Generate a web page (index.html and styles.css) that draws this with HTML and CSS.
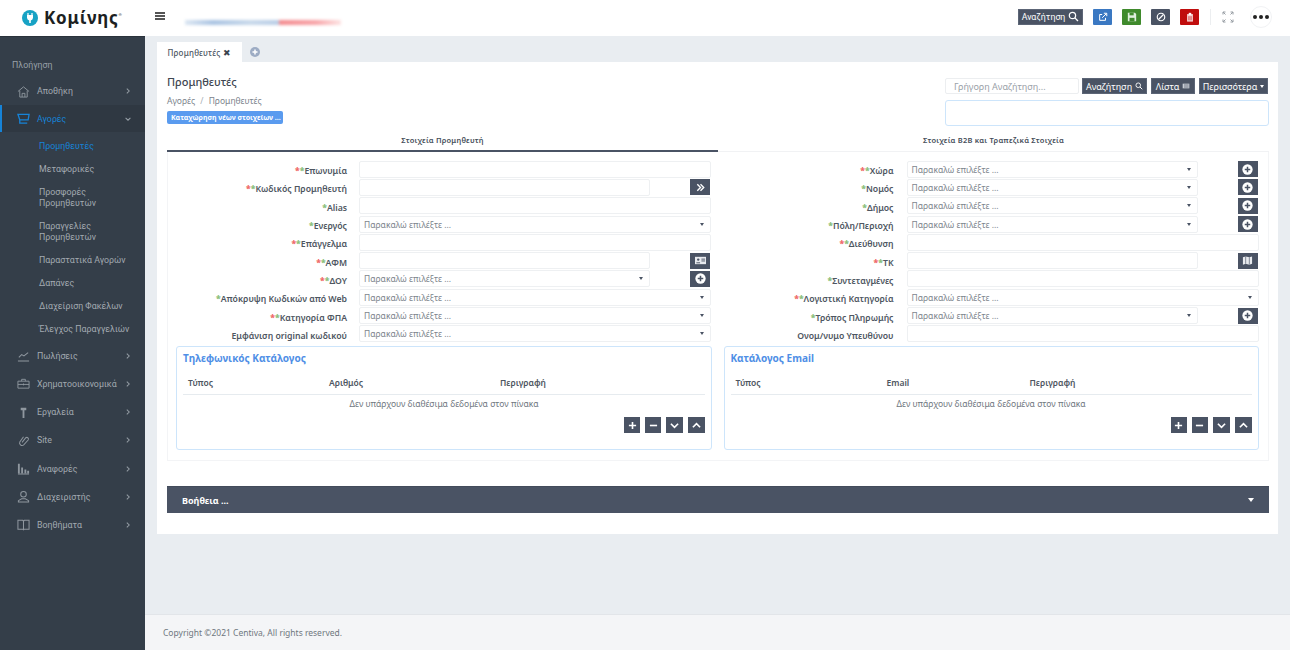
FILE: index.html
```html
<!DOCTYPE html>
<html lang="el">

<head>
    <meta charset="UTF-8">
    <title>Προμηθευτές</title>
    <link rel="stylesheet" href="styles.css">
</head>

<body>

<svg class="sprite" width="0" height="0">
    <symbol id="i-plus-circle" viewBox="0 0 16 16"><circle cx="8" cy="8" r="7.500" fill="#fff"/><path d="M8 4v8M4 8h8" stroke="#4a5364" stroke-width="2.200"/></symbol>
    <symbol id="i-search" viewBox="0 0 16 16"><circle cx="6.500" cy="6.500" r="4.600" fill="none" stroke="#fff" stroke-width="1.800"/><path d="M10 10l4.500 4.500" stroke="#fff" stroke-width="2"/></symbol>
    <symbol id="i-chev" viewBox="0 0 10 10"><path d="M3.500 2l3 3-3 3" fill="none" stroke="#949ca4" stroke-width="1.300"/></symbol>
</svg>

<header class="topbar">
    <div class="logo">
        <svg class="logo-icon" viewBox="0 0 16 16"><circle cx="8" cy="8" r="8" fill="#17a2c4"/><path d="M6 3v2M10 3v2" stroke="#fff" stroke-width="1.200"/><path d="M5 5h6v2.700a3 3 0 0 1-2.200 2.800V13H7.200v-2.500A3 3 0 0 1 5 7.700z" fill="#fff"/></svg>
        <span class="logo-text">Κομίνης</span><span class="logo-mark">®</span>
    </div>
    <div class="burger"><span></span><span></span><span></span></div>
    <div class="smudge"><span class="smudge-blue"></span><span class="smudge-red"></span></div>
    <div class="top-actions">
        <a href="#" class="btn btn-top">Αναζήτηση <svg class="ic-12"><use href="#i-search"/></svg></a>
        <a href="#" class="btn-square btn-blue">
            <svg viewBox="0 0 12 12"><path d="M9 7v3H2V3h3" fill="none" stroke="#fff" stroke-width="1.200"/><path d="M5 7l5-5M7 1.500h3.500V5" fill="none" stroke="#fff" stroke-width="1.200"/></svg>
        </a>
        <a href="#" class="btn-square btn-green">
            <svg viewBox="0 0 12 12"><path d="M1 1h8.500L11 2.500V11H1z" fill="#dfeedd"/><path d="M3 1h5v3H3z" fill="#3f8a2c"/><path d="M3 7h6v4H3z" fill="#3f8a2c"/></svg>
        </a>
        <a href="#" class="btn-square btn-dark">
            <svg viewBox="0 0 12 12"><circle cx="6" cy="6" r="4.500" fill="none" stroke="#fff" stroke-width="1.400"/><path d="M3 9l6-6" stroke="#fff" stroke-width="1.400"/></svg>
        </a>
        <a href="#" class="btn-square btn-red">
            <svg viewBox="0 0 12 12"><path d="M2.500 2.500h7V11.500h-7z" fill="#f6d5d5"/><path d="M4.500 1h3v2.500h-3z" fill="#fff"/><path d="M4.500 5v5M6 5v5M7.500 5v5" stroke="#c00d0d" stroke-width=".6"/></svg>
        </a>
        <span class="top-sep"></span>
        <svg class="expand" viewBox="0 0 12 12"><path d="M1 3.500V1h2.500M8.500 1H11v2.500M11 8.500V11H8.500M3.500 11H1V8.500M1.500 1.500l2 2M10.500 1.500l-2 2M10.500 10.500l-2-2M1.500 10.500l2-2" fill="none" stroke="#7b838c" stroke-width=".8"/></svg>
        <div class="dots"><span></span><span></span><span></span></div>
    </div>
</header>

<div class="layout">
    <aside class="sidebar">
        <div class="nav-title">Πλοήγηση</div>
        <a href="#" class="nav-item">
            <svg class="nav-icon" viewBox="0 0 14 14"><path d="M1 7l6-5 6 5M3 6v7h8V6M5.500 13V9h3v4" fill="none" stroke="#8f979f" stroke-width="1"/></svg>
            <span>Αποθήκη</span><svg class="chev"><use href="#i-chev"/></svg>
        </a>
        <a href="#" class="nav-item active">
            <svg class="nav-icon" viewBox="0 0 14 14"><path d="M1 2.500h12l-1 6H3zM3 8.500V12h8" fill="none" stroke="#1683d8" stroke-width="1.400"/></svg>
            <span>Αγορές</span><svg class="chev chev-open"><use href="#i-chev"/></svg>
        </a>
        <div class="subnav">
            <a href="#" class="sub-item current">Προμηθευτές</a>
            <a href="#" class="sub-item">Μεταφορικές</a>
            <a href="#" class="sub-item">Προσφορές<br>Προμηθευτών</a>
            <a href="#" class="sub-item">Παραγγελίες<br>Προμηθευτών</a>
            <a href="#" class="sub-item">Παραστατικά Αγορών</a>
            <a href="#" class="sub-item">Δαπάνες</a>
            <a href="#" class="sub-item">Διαχείριση Φακέλων</a>
            <a href="#" class="sub-item">Έλεγχος Παραγγελιών</a>
        </div>
        <a href="#" class="nav-item">
            <svg class="nav-icon" viewBox="0 0 14 14"><path d="M1 13h12M2 9l3-3 2.500 1.500L12 4" fill="none" stroke="#8f979f" stroke-width="1.100"/></svg>
            <span>Πωλήσεις</span><svg class="chev"><use href="#i-chev"/></svg>
        </a>
        <a href="#" class="nav-item">
            <svg class="nav-icon" viewBox="0 0 14 14"><path d="M1 4.500h12V12H1zM5 4.500V2.500h4v2M1 8h12M7 7v2" fill="none" stroke="#8f979f" stroke-width="1"/></svg>
            <span>Χρηματοοικονομικά</span><svg class="chev"><use href="#i-chev"/></svg>
        </a>
        <a href="#" class="nav-item">
            <svg class="nav-icon" viewBox="0 0 14 14"><path d="M4 2h6v2.500H4zM6 4.500h2V13H6z" fill="#8f979f"/></svg>
            <span>Εργαλεία</span><svg class="chev"><use href="#i-chev"/></svg>
        </a>
        <a href="#" class="nav-item">
            <svg class="nav-icon" viewBox="0 0 14 14"><path d="M5.500 9l4-5a1.800 1.800 0 0 1 2.500 2.500L7 12a2.800 2.800 0 0 1-4-3.500L7 3" fill="none" stroke="#8f979f" stroke-width="1.100"/></svg>
            <span>Site</span><svg class="chev"><use href="#i-chev"/></svg>
        </a>
        <a href="#" class="nav-item">
            <svg class="nav-icon" viewBox="0 0 14 14"><path d="M1 2h2v10H1zM4.500 6h2v6h-2zM8 8h2v4H8zM11 9.500h2V12h-2zM1 12.500h12v1H1z" fill="#8f979f"/></svg>
            <span>Αναφορές</span><svg class="chev"><use href="#i-chev"/></svg>
        </a>
        <a href="#" class="nav-item">
            <svg class="nav-icon" viewBox="0 0 14 14"><circle cx="7" cy="4.500" r="3" fill="none" stroke="#8f979f" stroke-width="1.100"/><path d="M1.500 13v-1.500L5 9.500h4l3.500 2V13z" fill="none" stroke="#8f979f" stroke-width="1.100"/></svg>
            <span>Διαχειριστής</span><svg class="chev"><use href="#i-chev"/></svg>
        </a>
        <a href="#" class="nav-item">
            <svg class="nav-icon" viewBox="0 0 14 14"><path d="M1 2.500h5.200L7 3.500l.8-1H13V12H7.800L7 12.800 6.200 12H1zM7 3.500v9" fill="none" stroke="#8f979f" stroke-width="1.100"/></svg>
            <span>Βοηθήματα</span><svg class="chev"><use href="#i-chev"/></svg>
        </a>
    </aside>

    <main class="main">
        <div class="tabbar">
            <div class="page-tab">Προμηθευτές <span class="tab-close">✖</span></div>
            <svg class="tab-add" viewBox="0 0 16 16"><circle cx="8" cy="8" r="8" fill="#9dacc4"/><path d="M8 4v8M4 8h8" stroke="#fff" stroke-width="2.400"/></svg>
        </div>

        <section class="card">
            <div class="page-head">
                <div class="page-info">
                    <h1 class="page-title">Προμηθευτές</h1>
                    <div class="breadcrumb">Αγορές <i>/</i> Προμηθευτές</div>
                    <span class="status-badge">Καταχώρηση νέων στοιχείων ...</span>
                </div>
                <div class="quick">
                    <div class="quick-row">
                        <input class="quick-input" type="text" placeholder="Γρήγορη Αναζήτηση...">
                        <a href="#" class="btn btn-w65">Αναζήτηση <svg class="ic-9"><use href="#i-search"/></svg></a>
                        <a href="#" class="btn btn-w44">Λίστα
                            <svg class="ic-9" viewBox="0 0 12 12"><path d="M1 2.500h10v7H1z" fill="#c9ced6"/><path d="M3 4.500h7M3 7.500h7" stroke="#4a5364"/></svg>
                        </a>
                        <a href="#" class="btn btn-w69">Περισσότερα <span class="caret-white"></span></a>
                    </div>
                    <div class="quick-box"></div>
                </div>
            </div>

            <div class="form-tabs">
                <div class="form-tab selected">Στοιχεία Προμηθευτή</div>
                <div class="form-tab">Στοιχεία B2B και Τραπεζικά Στοιχεία</div>
            </div>

            <div class="form-panel">
                <div class="form-col form-col-left">
                    <div class="form-row"><label><b class="req">*</b><b class="rec">*</b>Επωνυμία</label><div class="field"></div></div>
                    <div class="form-row"><label><b class="req">*</b><b class="rec">*</b>Κωδικός Προμηθευτή</label><div class="field short"></div><a href="#" class="addon"><svg viewBox="0 0 12 12"><path d="M2.500 2.500L6 6l-3.500 3.500M6 2.500L9.500 6 6 9.500" fill="none" stroke="#fff" stroke-width="1.500"/></svg></a></div>
                    <div class="form-row"><label><b class="rec">*</b>Alias</label><div class="field"></div></div>
                    <div class="form-row"><label><b class="rec">*</b>Ενεργός</label><div class="field select">Παρακαλώ επιλέξτε ...</div></div>
                    <div class="form-row"><label><b class="req">*</b><b class="rec">*</b>Επάγγελμα</label><div class="field"></div></div>
                    <div class="form-row"><label><b class="req">*</b><b class="rec">*</b>ΑΦΜ</label><div class="field short"></div><a href="#" class="addon"><svg class="addon-wide" viewBox="0 0 14 12"><path d="M1 2h12v8H1z" fill="#e8eaee"/><circle cx="4.500" cy="5" r="1.300" fill="#4a5364"/><path d="M2.500 8.500h4M8 4.500h4M8 6.500h4" stroke="#4a5364"/></svg></a></div>
                    <div class="form-row"><label><b class="req">*</b><b class="rec">*</b>ΔΟΥ</label><div class="field short select">Παρακαλώ επιλέξτε ...</div><a href="#" class="addon"><svg><use href="#i-plus-circle"/></svg></a></div>
                    <div class="form-row"><label><b class="rec">*</b>Απόκρυψη Κωδικών από Web</label><div class="field select">Παρακαλώ επιλέξτε ...</div></div>
                    <div class="form-row"><label><b class="req">*</b><b class="rec">*</b>Κατηγορία ΦΠΑ</label><div class="field select">Παρακαλώ επιλέξτε ...</div></div>
                    <div class="form-row"><label>Εμφάνιση original κωδικού</label><div class="field select">Παρακαλώ επιλέξτε ...</div></div>

                    <div class="sub-panel">
                        <h2 class="sub-title">Τηλεφωνικός Κατάλογος</h2>
                        <div class="tbl-head tbl-phone"><span>Τύπος</span><span>Αριθμός</span><span>Περιγραφή</span></div>
                        <div class="tbl-empty">Δεν υπάρχουν διαθέσιμα δεδομένα στον πίνακα</div>
                        <div class="tbl-actions">
                            <a href="#" class="mini"><svg viewBox="0 0 10 10"><path d="M5 1v8M1 5h8" stroke="#fff" stroke-width="1.800"/></svg></a>
                            <a href="#" class="mini"><svg viewBox="0 0 10 10"><path d="M1 5h8" stroke="#fff" stroke-width="1.800"/></svg></a>
                            <a href="#" class="mini mini-wide"><svg viewBox="0 0 10 10"><path d="M1 3l4 4 4-4" fill="none" stroke="#fff" stroke-width="1.800"/></svg></a>
                            <a href="#" class="mini mini-wide"><svg viewBox="0 0 10 10"><path d="M1 7l4-4 4 4" fill="none" stroke="#fff" stroke-width="1.800"/></svg></a>
                        </div>
                    </div>
                </div>

                <div class="form-col form-col-right">
                    <div class="form-row"><label><b class="req">*</b><b class="rec">*</b>Χώρα</label><div class="field short select">Παρακαλώ επιλέξτε ...</div><a href="#" class="addon"><svg><use href="#i-plus-circle"/></svg></a></div>
                    <div class="form-row"><label><b class="rec">*</b>Νομός</label><div class="field short select">Παρακαλώ επιλέξτε ...</div><a href="#" class="addon"><svg><use href="#i-plus-circle"/></svg></a></div>
                    <div class="form-row"><label><b class="rec">*</b>Δήμος</label><div class="field short select">Παρακαλώ επιλέξτε ...</div><a href="#" class="addon"><svg><use href="#i-plus-circle"/></svg></a></div>
                    <div class="form-row"><label><b class="rec">*</b>Πόλη/Περιοχή</label><div class="field short select">Παρακαλώ επιλέξτε ...</div><a href="#" class="addon"><svg><use href="#i-plus-circle"/></svg></a></div>
                    <div class="form-row"><label><b class="req">*</b><b class="rec">*</b>Διεύθυνση</label><div class="field"></div></div>
                    <div class="form-row"><label><b class="req">*</b><b class="rec">*</b>ΤΚ</label><div class="field short"></div><a href="#" class="addon"><svg viewBox="0 0 12 12"><path d="M1 2.500l3-1 4 1 3-1v8l-3 1-4-1-3 1z" fill="#e8eaee"/><path d="M4 1.500v8M8 2.500v8" stroke="#4a5364" stroke-width=".7"/></svg></a></div>
                    <div class="form-row"><label><b class="rec">*</b>Συντεταγμένες</label><div class="field"></div></div>
                    <div class="form-row"><label><b class="req">*</b><b class="rec">*</b>Λογιστική Κατηγορία</label><div class="field select">Παρακαλώ επιλέξτε ...</div></div>
                    <div class="form-row"><label><b class="rec">*</b>Τρόπος Πληρωμής</label><div class="field short select">Παρακαλώ επιλέξτε ...</div><a href="#" class="addon"><svg><use href="#i-plus-circle"/></svg></a></div>
                    <div class="form-row"><label>Ονομ/νυμο Υπευθύνου</label><div class="field"></div></div>

                    <div class="sub-panel">
                        <h2 class="sub-title">Κατάλογος Email</h2>
                        <div class="tbl-head tbl-email"><span>Τύπος</span><span>Email</span><span>Περιγραφή</span></div>
                        <div class="tbl-empty">Δεν υπάρχουν διαθέσιμα δεδομένα στον πίνακα</div>
                        <div class="tbl-actions">
                            <a href="#" class="mini"><svg viewBox="0 0 10 10"><path d="M5 1v8M1 5h8" stroke="#fff" stroke-width="1.800"/></svg></a>
                            <a href="#" class="mini"><svg viewBox="0 0 10 10"><path d="M1 5h8" stroke="#fff" stroke-width="1.800"/></svg></a>
                            <a href="#" class="mini mini-wide"><svg viewBox="0 0 10 10"><path d="M1 3l4 4 4-4" fill="none" stroke="#fff" stroke-width="1.800"/></svg></a>
                            <a href="#" class="mini mini-wide"><svg viewBox="0 0 10 10"><path d="M1 7l4-4 4 4" fill="none" stroke="#fff" stroke-width="1.800"/></svg></a>
                        </div>
                    </div>
                </div>
            </div>

            <div class="help-bar"><span>Βοήθεια ...</span><span class="caret-white caret-big"></span></div>
        </section>

        <footer class="footer">Copyright ©2021 Centiva, All rights reserved.</footer>
    </main>
</div>

</body>

</html>
```

FILE: styles.css
```css
* {
    box-sizing: border-box;
}

body {
    margin: 0;
    height: 650px;
    overflow: hidden;
    font-family: "Noto Sans", "Open Sans", sans-serif;
    font-size: 9px;
    color: #5b6470;
    background-color: #e9edf1;
}

a {
    text-decoration: none;
}

.sprite {
    position: absolute;
}

/* Kopfzeile */
.topbar {
    display: flex;
    align-items: center;
    height: 36px;
    background-color: #fff;
}

.logo {
    display: flex;
    align-items: center;
    width: 155px;
    padding-left: 22px;
}

.logo-icon {
    width: 16px;
    height: 16px;
    margin-right: 6px;
}

.logo-text {
    font-size: 17px;
    font-weight: 700;
    color: #1c1f22;
    letter-spacing: 0.8px;
    line-height: 20px;
}

.logo-mark {
    font-size: 4px;
    color: #333;
    align-self: flex-start;
    margin-top: 4px;
}

.burger {
    width: 10px;
    margin-top: -3px;
}

.burger span {
    display: block;
    height: 1.5px;
    margin-bottom: 1.5px;
    background-color: #555;
}

.smudge {
    display: flex;
    margin-left: 20px;
    margin-top: 8px;
    filter: blur(1.6px);
}

.smudge-blue {
    width: 94px;
    height: 5px;
    background: linear-gradient(90deg, #dbe6f2, #a9c3e2 30%, #c7d8ea 70%, #b8cde6);
}

.smudge-red {
    width: 62px;
    height: 5px;
    background: linear-gradient(90deg, #f38b8f, #f7a4a8 60%, #fde3e3);
}

.top-actions {
    display: flex;
    align-items: center;
    margin-left: auto;
    margin-top: -3px;
    padding-right: 18px;
}

.btn {
    display: flex;
    align-items: center;
    justify-content: center;
    gap: 3px;
    height: 16px;
    color: #fff;
    font-size: 9px;
    background-color: #4a5364;
    border: 1px solid #5c6576;
}

.btn-top {
    width: 65px;
    margin-right: 10px;
    font-family: Roboto, sans-serif;
    font-size: 8.8px;
}

.ic-12 {
    width: 11px;
    height: 11px;
}

.ic-9 {
    width: 8px;
    height: 8px;
}

.btn-square {
    display: flex;
    align-items: center;
    justify-content: center;
    width: 19px;
    height: 16px;
    margin-right: 10px;
    border-radius: 1px;
}

.btn-square svg {
    width: 10px;
    height: 10px;
}

.btn-blue {
    background-color: #3a78c2;
}

.btn-green {
    background-color: #3f8a2c;
}

.btn-dark {
    background-color: #4a5364;
}

.btn-red {
    background-color: #c00d0d;
}

.top-sep {
    width: 1px;
    height: 16px;
    margin: 0 11px 0 1px;
    background-color: #eceef0;
}

.expand {
    width: 12px;
    height: 12px;
    margin-right: 16px;
}

.dots {
    display: flex;
    align-items: center;
    justify-content: center;
    gap: 2px;
    width: 22px;
    height: 22px;
    border: 1px solid #f1f2f4;
    border-radius: 50%;
}

.dots span {
    width: 4px;
    height: 4px;
    border-radius: 50%;
    background-color: #222;
}

/* Seitenaufbau */
.layout {
    display: flex;
    height: 614px;
}

.sidebar {
    width: 145px;
    flex-shrink: 0;
    padding-top: 22px;
    font-family: Roboto, "Noto Sans", sans-serif;
    font-size: 8.8px;
    color: #a3aab1;
    background-color: #343e49;
    border-top: 1px solid #2a323b;
}

.nav-title {
    padding-left: 12px;
    margin-bottom: 5px;
    line-height: 13px;
    color: #98a0a8;
}

.nav-item {
    display: flex;
    align-items: center;
    height: 28.2px;
    padding-left: 17px;
    color: #a3aab1;
}

.nav-item span {
    flex: 1;
    margin-left: 7px;
    white-space: nowrap;
}

.nav-icon {
    width: 13px;
    height: 13px;
    flex-shrink: 0;
}

.chev {
    width: 8px;
    height: 8px;
    margin-right: 13px;
}

.chev-open {
    transform: rotate(90deg);
}

.nav-item.active {
    height: 27px;
    padding-left: 15px;
    color: #1683d8;
    background-color: #2f3842;
    border-left: 2px solid #1683d8;
}

.subnav {
    padding-top: 3px;
    margin-bottom: 0.5px;
}

.sub-item {
    display: block;
    padding: 6px 0 6px 39px;
    line-height: 11px;
    color: #a3aab1;
}

.sub-item.current {
    color: #1683d8;
}

/* Inhalt */
.main {
    flex: 1;
    display: flex;
    flex-direction: column;
    min-width: 0;
}

.tabbar {
    display: flex;
    align-items: center;
    height: 26px;
    padding: 6px 0 0 12px;
}

.page-tab {
    display: flex;
    align-items: center;
    justify-content: center;
    gap: 3px;
    width: 85px;
    height: 20px;
    font-size: 8px;
    font-weight: 500;
    letter-spacing: 0.2px;
    color: #4b5460;
    background-color: #fff;
}

.tab-close {
    font-size: 9px;
    color: #3a4350;
}

.tab-add {
    width: 10px;
    height: 10px;
    margin-left: 8px;
}

.card {
    width: 1121px;
    height: 472px;
    margin-left: 12px;
    padding: 12px 9px 0 10px;
    background-color: #fff;
}

.page-head {
    display: flex;
    justify-content: space-between;
    height: 59px;
}

.page-title {
    margin: 0;
    font-size: 11px;
    font-weight: 500;
    line-height: 16px;
    color: #3e4651;
}

.breadcrumb {
    margin-top: 4px;
    font-size: 8.5px;
    line-height: 13px;
    color: #7b838c;
}

.breadcrumb i {
    margin: 0 3px;
    font-style: normal;
    color: #a8aeb5;
}

.status-badge {
    display: inline-block;
    width: 116px;
    height: 13px;
    margin-top: 4px;
    padding-left: 4px;
    line-height: 13px;
    font-size: 7px;
    font-weight: 700;
    white-space: nowrap;
    color: #fff;
    background-color: #5a9bef;
    border-radius: 2px;
}

.quick {
    width: 324px;
    padding-top: 4px;
}

.quick-row {
    display: flex;
    gap: 4px;
    height: 16px;
}

.quick-input {
    width: 134px;
    height: 16px;
    margin-right: -1px;
    padding: 0 8px;
    font-family: inherit;
    font-size: 9px;
    border: 1px solid #eceef0;
    border-radius: 2px;
}

.quick-input::placeholder {
    color: #9aa1a8;
}

.btn-w65 {
    width: 65px;
}

.btn-w44 {
    width: 44px;
}

.btn-w69 {
    width: 69px;
}

.caret-white {
    display: inline-block;
    border-top: 3px solid #fff;
    border-left: 2.5px solid transparent;
    border-right: 2.5px solid transparent;
}

.quick-box {
    height: 26px;
    margin-top: 6px;
    border: 1px solid #cde5fb;
    border-radius: 3px;
}

.form-tabs {
    display: flex;
    width: 1102px;
    height: 19px;
}

.form-tab {
    flex: 1;
    padding-top: 2px;
    text-align: center;
    font-size: 7.5px;
    font-weight: 600;
    letter-spacing: 0.2px;
    color: #454d59;
    border-bottom: 1px solid #f1f2f4;
}

.form-tab.selected {
    border-bottom: 2px solid #4a5364;
}

.form-panel {
    display: flex;
    width: 1102px;
    height: 309px;
    border-right: 1px solid #f3f4f6;
    border-bottom: 1px solid #f3f4f6;
    border-left: 1px solid #f3f4f6;
}

.form-col {
    padding-top: 8px;
}

.form-col-left {
    width: 552px;
}

.form-col-right {
    width: 549px;
}

.form-row {
    display: flex;
    align-items: center;
    height: 18.3px;
}

.form-row label {
    flex-shrink: 0;
    width: 179px;
    margin-right: 12px;
    padding-top: 4px;
    text-align: right;
    font-size: 8.7px;
    font-weight: 600;
    color: #4e5661;
    white-space: nowrap;
}

.form-col-right .form-row label {
    width: 174px;
    margin-right: 13px;
}

.req {
    color: #ef6b6b;
}

.rec {
    color: #8cc07d;
}

.field {
    position: relative;
    width: 352px;
    height: 17px;
    padding-left: 4px;
    line-height: 15px;
    color: #7d858d;
    font-size: 8.5px;
    background-color: #fff;
    border: 1px solid #eef0f2;
    border-radius: 2px;
}

.field.short {
    width: 291px;
}

.select::after {
    content: "";
    position: absolute;
    right: 6px;
    top: 6px;
    border-top: 3px solid #4a5364;
    border-left: 2.5px solid transparent;
    border-right: 2.5px solid transparent;
}

.addon {
    display: flex;
    align-items: center;
    justify-content: center;
    width: 20px;
    height: 16px;
    margin-left: 40px;
    background-color: #4a5364;
}

.addon svg {
    width: 11px;
    height: 11px;
}

.addon .addon-wide {
    width: 13px;
}

.sub-panel {
    width: 536px;
    height: 104px;
    margin: 3.5px 0 0 8px;
    padding: 4px 6px 0;
    border: 1px solid #cde5fb;
    border-radius: 3px;
}

.form-col-right .sub-panel {
    width: 535px;
    margin-left: 4px;
}

.sub-title {
    margin: 0;
    font-size: 10px;
    font-weight: 700;
    line-height: 14px;
    color: #4f8fe6;
}

.tbl-head {
    display: grid;
    height: 20px;
    margin-top: 10px;
    padding-top: 2px;
    padding-left: 5px;
    font-size: 8.5px;
    font-weight: 600;
    color: #4e5661;
    border-bottom: 1px solid #e6ebef;
}

.tbl-phone {
    grid-template-columns: 141px 171px 1fr;
}

.tbl-email {
    grid-template-columns: 151px 143px 1fr;
}

.tbl-empty {
    padding-top: 2px;
    line-height: 14px;
    text-align: center;
    font-size: 8.5px;
    color: #6f7780;
}

.tbl-actions {
    display: flex;
    justify-content: flex-end;
    gap: 5px;
    margin-top: 6px;
}

.mini {
    display: flex;
    align-items: center;
    justify-content: center;
    width: 16px;
    height: 16px;
    background-color: #4a5364;
}

.mini-wide {
    width: 17px;
}

.mini svg {
    width: 9px;
    height: 9px;
}

.help-bar {
    display: flex;
    align-items: center;
    justify-content: space-between;
    width: 1102px;
    height: 27px;
    margin-top: 25px;
    padding: 0 15px;
    font-size: 9px;
    font-weight: 700;
    color: #fff;
    background-color: #4a5364;
    border-top: 1px solid #434b5b;
}

.caret-big {
    border-top-width: 4px;
    border-left-width: 3.5px;
    border-right-width: 3.5px;
}

.footer {
    height: 36px;
    margin-top: auto;
    padding: 12px 0 0 18px;
    font-size: 8.5px;
    color: #6f7780;
    background-color: #f4f5f7;
    border-top: 1px solid #e2e5e9;
}
```
